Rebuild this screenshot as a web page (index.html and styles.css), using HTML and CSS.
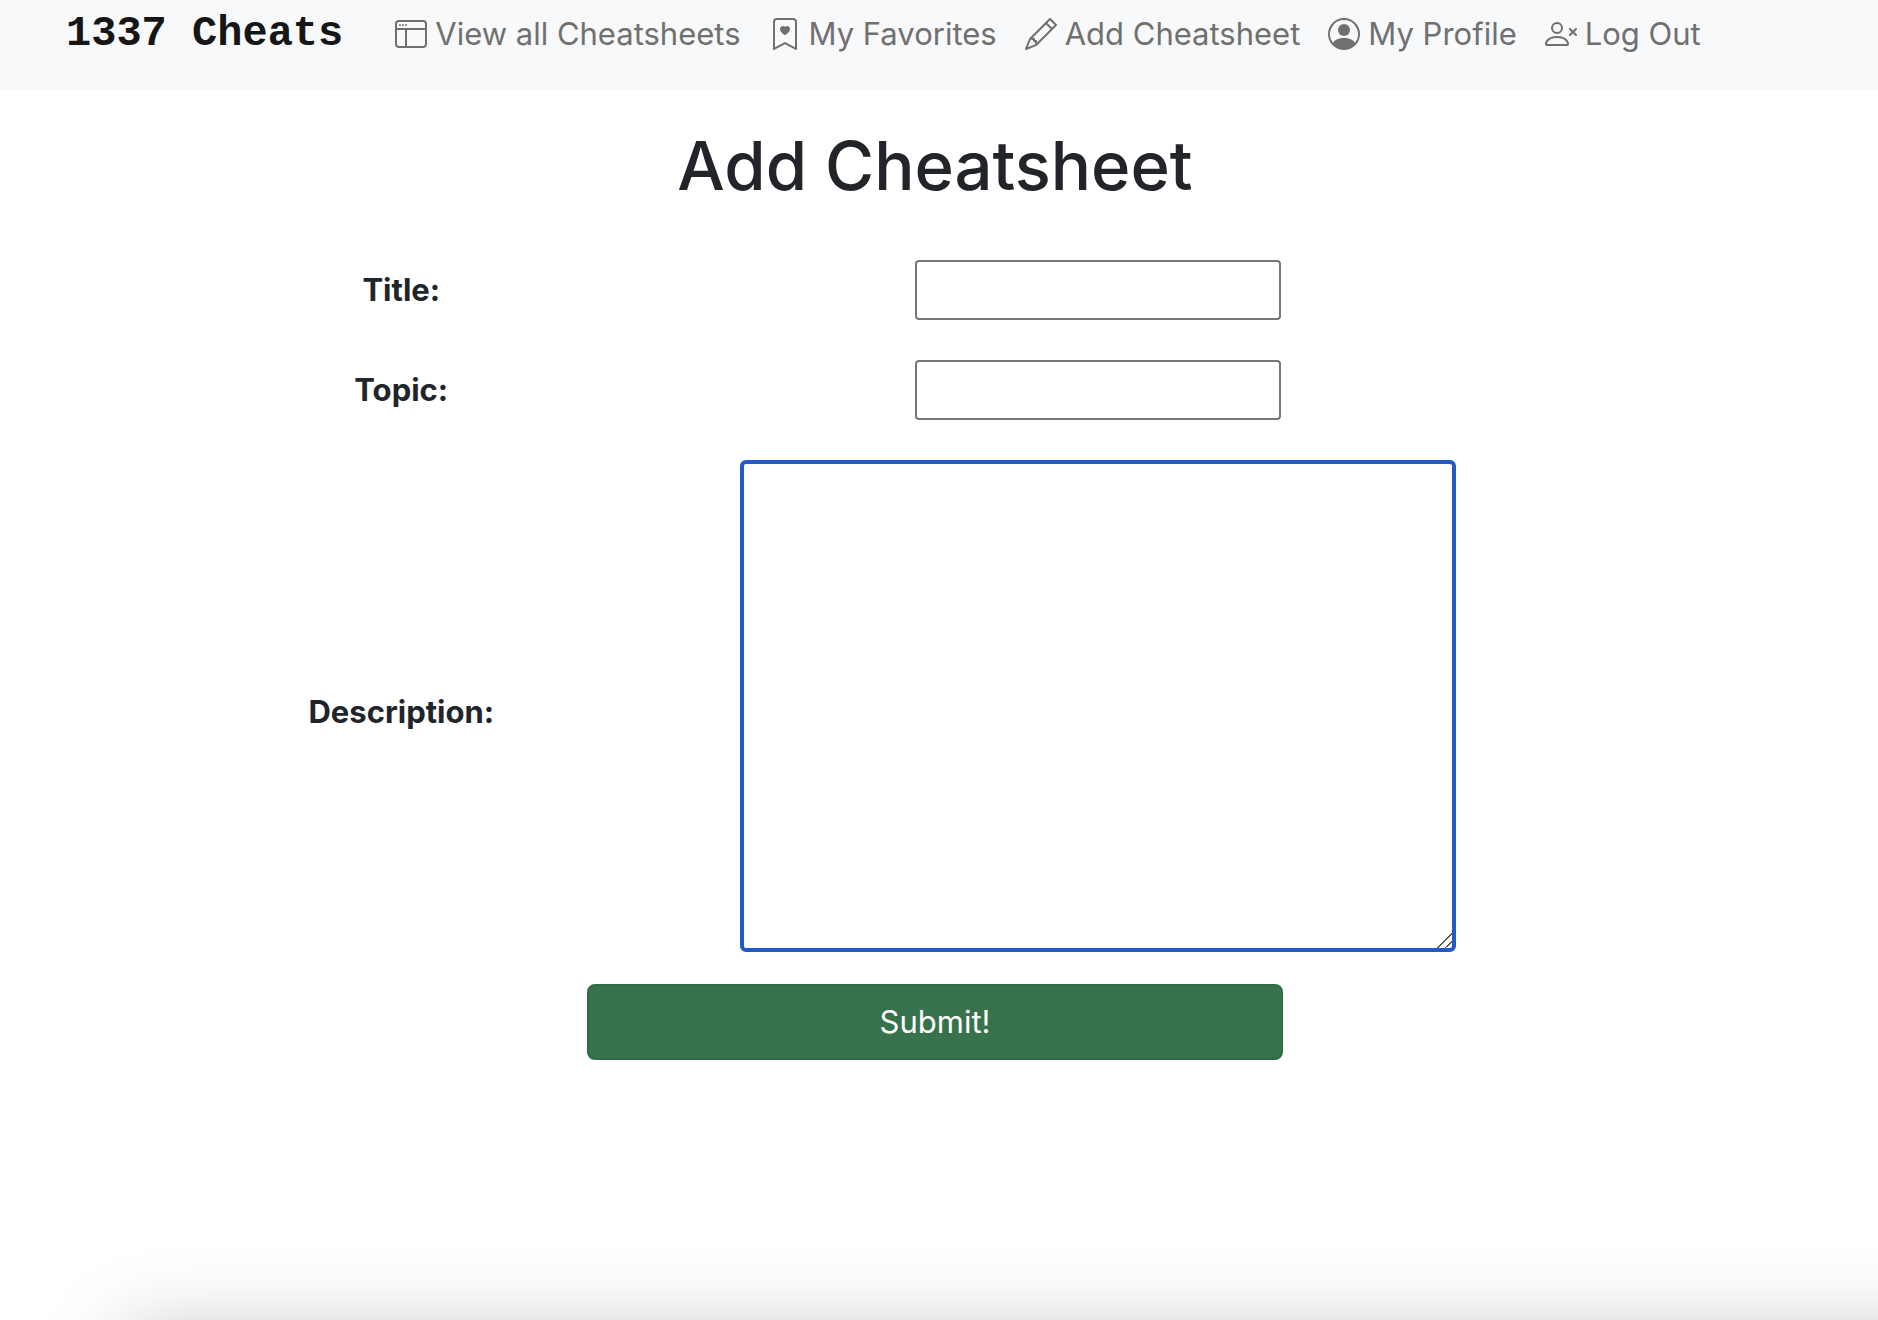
FILE: index.html
```html
<!DOCTYPE html>
<html lang="en">
<head>
<meta charset="utf-8">
<title>1337 Cheats - Add Cheatsheet</title>
<link rel="stylesheet" href="styles.css">
</head>
<body>
<nav class="navbar">
  <a class="brand" href="#">1337 Cheats</a>
  <a class="nav-link" href="#">
    <svg class="icon" viewBox="0 0 16 16" aria-hidden="true"><path d="M2.5 4a.5.5 0 1 0 0-1 .5.5 0 0 0 0 1zm2-.5a.5.5 0 1 1-1 0 .5.5 0 0 1 1 0zm1 .5a.5.5 0 1 0 0-1 .5.5 0 0 0 0 1z"/><path d="M2 1a2 2 0 0 0-2 2v10a2 2 0 0 0 2 2h12a2 2 0 0 0 2-2V3a2 2 0 0 0-2-2H2zm12 1a1 1 0 0 1 1 1v2H1V3a1 1 0 0 1 1-1h12zM1 13V6h4v8H2a1 1 0 0 1-1-1zm5 1V6h9v7a1 1 0 0 1-1 1H6z"/></svg>
    View all Cheatsheets
  </a>
  <a class="nav-link" href="#">
    <svg class="icon" viewBox="0 0 16 16" aria-hidden="true"><path fill-rule="evenodd" d="M8 4.41c1.387-1.425 4.854 1.07 0 4.277C3.146 5.48 6.613 2.986 8 4.412z"/><path d="M2 2a2 2 0 0 1 2-2h8a2 2 0 0 1 2 2v13.5a.5.5 0 0 1-.777.416L8 13.101l-5.223 2.815A.5.5 0 0 1 2 15.5V2zm2-1a1 1 0 0 0-1 1v12.566l4.723-2.482a.5.5 0 0 1 .554 0L13 14.566V2a1 1 0 0 0-1-1H4z"/></svg>
    My Favorites
  </a>
  <a class="nav-link" href="#">
    <svg class="icon" viewBox="0 0 16 16" aria-hidden="true"><path d="M12.146.146a.5.5 0 0 1 .708 0l3 3a.5.5 0 0 1 0 .708l-10 10a.5.5 0 0 1-.168.11l-5 2a.5.5 0 0 1-.65-.65l2-5a.5.5 0 0 1 .11-.168l10-10zM11.207 2.5 13.5 4.793 14.793 3.5 12.5 1.207 11.207 2.5zm1.586 3L10.5 3.207 4 9.707V10h.5a.5.5 0 0 1 .5.5v.5h.5a.5.5 0 0 1 .5.5v.5h.293l6.5-6.5zm-9.761 5.175-.106.106-1.528 3.821 3.821-1.528.106-.106A.5.5 0 0 1 5 12.5V12h-.5a.5.5 0 0 1-.5-.5V11h-.5a.5.5 0 0 1-.468-.325z"/></svg>
    Add Cheatsheet
  </a>
  <a class="nav-link" href="#">
    <svg class="icon" viewBox="0 0 16 16" aria-hidden="true"><path d="M11 6a3 3 0 1 1-6 0 3 3 0 0 1 6 0z"/><path fill-rule="evenodd" d="M0 8a8 8 0 1 1 16 0A8 8 0 0 1 0 8zm8-7a7 7 0 0 0-5.468 11.37C3.242 11.226 4.805 10 8 10s4.757 1.225 5.468 2.37A7 7 0 0 0 8 1z"/></svg>
    My Profile
  </a>
  <a class="nav-link" href="#">
    <svg class="icon" viewBox="0 0 16 16" aria-hidden="true"><path d="M6 8a3 3 0 1 0 0-6 3 3 0 0 0 0 6zm2-3a2 2 0 1 1-4 0 2 2 0 0 1 4 0zm4 8c0 1-1 1-1 1H1s-1 0-1-1 1-4 6-4 6 3 6 4zm-1-.004c-.001-.246-.154-.986-.832-1.664C9.516 10.68 8.289 10 6 10c-2.29 0-3.516.68-4.168 1.332-.678.678-.83 1.418-.832 1.664h10z"/><path fill-rule="evenodd" d="M12.146 5.146a.5.5 0 0 1 .708 0L14 6.293l1.146-1.147a.5.5 0 0 1 .708.708L14.707 7l1.147 1.146a.5.5 0 0 1-.708.708L14 7.707l-1.146 1.147a.5.5 0 0 1-.708-.708L13.293 7l-1.147-1.146a.5.5 0 0 1 0-.708z"/></svg>
    Log Out
  </a>
</nav>
<main class="page">
  <h1 class="title">Add Cheatsheet</h1>
  <form class="form">
    <div class="row">
      <label class="label" for="title">Title:</label>
      <input class="field" id="title" type="text">
    </div>
    <div class="row">
      <label class="label" for="topic">Topic:</label>
      <input class="field" id="topic" type="text">
    </div>
    <div class="row">
      <label class="label label-large" for="description">Description:</label>
      <textarea class="field field-large" id="description"></textarea>
    </div>
    <button class="submit" type="submit">Submit!</button>
  </form>
</main>
<div class="bottom-shadow"></div>
</body>
</html>
```
FILE: styles.css
```css
* {
  box-sizing: border-box;
}

body {
  margin: 0;
  background: #fff;
  color: #212529;
  font: 31px/48px Inter, "Liberation Sans", sans-serif;
}

.navbar {
  display: flex;
  gap: 28px;
  height: 90px;
  padding: 10px 66px;
  background: #f8f9fb;
  white-space: nowrap;
}

.brand {
  margin-right: 24px;
  color: #161616;
  font: bold 42px/48px "Liberation Mono", monospace;
  text-decoration: none;
}

.nav-link {
  display: flex;
  gap: 8px;
  height: 48px;
  color: #707070;
  text-decoration: none;
}

.icon {
  flex: none;
  width: 32px;
  height: 32px;
  margin-top: 8px;
  fill: currentColor;
}

.page {
  padding-right: 8px;
}

.title {
  margin: 32px 0 50px;
  font-size: 67px;
  font-weight: 500;
  line-height: 88px;
  text-align: center;
}

.form {
  display: flex;
  flex-direction: column;
  gap: 40px;
}

.row {
  display: grid;
  grid-template-columns: minmax(0, 23fr) minmax(0, 23fr) minmax(0, 14fr);
  align-items: center;
  justify-items: center;
  padding-left: 53px;
}

.label {
  font-weight: 700;
}

.label-large {
  padding-top: 12px;
}

.field {
  width: 366px;
  height: 60px;
  padding: 4px;
  border: 2px solid #767676;
  border-radius: 4px;
  background: #fff;
  font: inherit;
  outline: none;
}

.field-large {
  display: block;
  width: 716px;
  height: 492px;
  border: 4px solid #2459c6;
  border-radius: 6px;
}

.field-large::-webkit-resizer {
  background: linear-gradient(135deg, transparent 48%, #555 48% 54%, transparent 54% 74%, #555 74% 80%, transparent 80%);
}

.submit {
  align-self: center;
  width: 696px;
  max-width: 100%;
  height: 76px;
  margin-top: -8px;
  border: 2px solid #306c46;
  border-radius: 8px;
  background: #38724c;
  color: #fff;
  font: inherit;
}

.bottom-shadow {
  position: fixed;
  top: calc(100% + 18px);
  right: -200px;
  left: 125px;
  height: 400px;
  box-shadow: 0 0 80px rgba(0, 0, 0, 0.28);
}
```
